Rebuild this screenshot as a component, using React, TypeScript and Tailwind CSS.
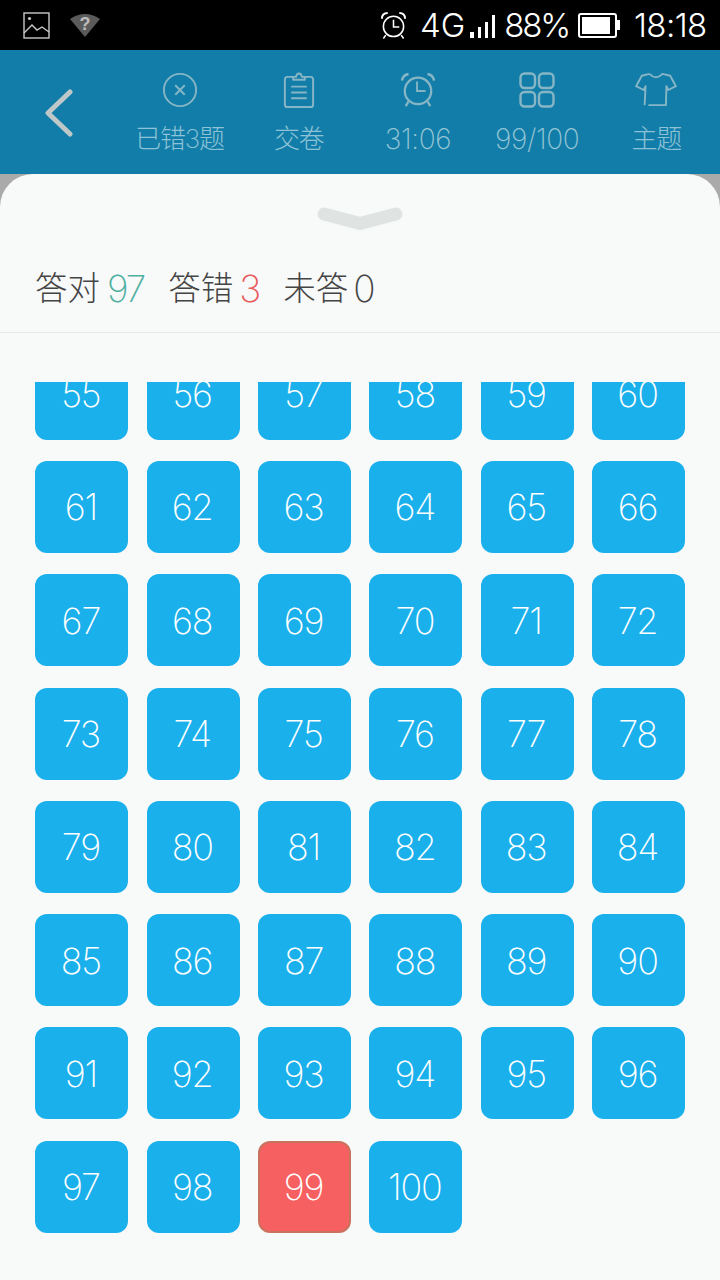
const nums = Array.from({ length: 46 }, (_, i) => i + 55);

const font = { fontFamily: '"Inter", "Noto Sans CJK SC", sans-serif' };

function HeaderItem({ icon, label, numeric }: { icon: React.ReactNode; label: string; numeric?: boolean }) {
  return (
    <div className="flex w-[119.2px] shrink-0 flex-col items-center">
      <div className="flex h-[40px] w-[50px] items-center justify-center">{icon}</div>
      <div
        className={`mt-[13px] leading-[32px] whitespace-nowrap ${
          numeric
            ? "text-[28px] font-extralight tracking-[-0.4px] text-[#93c6d4]"
            : "text-[26px] font-extralight tracking-[-1.2px] text-[#8cc3d6]"
        }`}
      >
        {label}
      </div>
    </div>
  );
}

export default function App() {
  const stroke = "#86b6c5";
  return (
    <div className="flex h-[1280px] w-[720px] flex-col overflow-hidden bg-[#aaaaaa]" style={font}>
      {/* status bar */}
      <div className="flex h-[50px] shrink-0 items-center bg-black pl-[23px] text-[33px] leading-none font-light text-white">
        <svg width="27" height="27" viewBox="0 0 27 27" fill="none" stroke="#c9c9c9" strokeWidth="1.4">
          <rect x="1" y="1" width="25" height="25" />
          <path d="M1 21 L9 13 L14 18 L19 15 L26 20" />
          <circle cx="6.5" cy="6.5" r="1.6" fill="#c9c9c9" stroke="none" />
        </svg>
        <svg className="ml-[20px]" width="30" height="24" viewBox="0 0 30 24">
          <path d="M0 6 Q15 -4 30 6 L15 24 Z" fill="#5b5b5b" />
          <text x="15" y="17" textAnchor="middle" fontSize="18" fontWeight="700" fill="#bdbdbd" fontFamily="Liberation Sans">?</text>
        </svg>
        <svg className="ml-[280px]" width="27" height="29" viewBox="0 0 28 30" fill="none" stroke="#fff" strokeWidth="1.6">
          <circle cx="14" cy="16" r="10.5" />
          <path d="M14 9 V16.5 H20" />
          <path d="M2 8 Q2 2 8 2 M20 2 Q26 2 26 8" strokeWidth="2" />
          <path d="M6 25 L3.5 28.5 M22 25 L24.5 28.5" />
        </svg>
        <span className="ml-[13px]">4G</span>
        <div className="ml-[5px] flex items-end gap-[4px] self-center pt-[3px]">
          <div className="h-[6px] w-[4px] bg-white" />
          <div className="h-[11px] w-[3px] bg-white" />
          <div className="h-[16px] w-[3px] bg-white" />
          <div className="h-[23px] w-[3px] bg-white" />
        </div>
        <span className="ml-[9px] tracking-[-2.2px]">88%</span>
        <div className="ml-[9px] flex items-center">
          <div className="flex h-[25px] w-[39px] items-center rounded-[3px] border-2 border-white p-[2px]">
            <div className="h-full w-[28px] bg-white" />
          </div>
          <div className="h-[10px] w-[3px] bg-white" />
        </div>
        <span className="ml-[14px] tracking-[-0.6px]">18:18</span>
      </div>

      {/* header */}
      <div className="flex h-[124px] shrink-0 bg-[#137da9]">
        <div className="flex w-[120px] shrink-0 items-center pl-[44px] pt-[2px]">
          <svg width="30" height="48" viewBox="0 0 30 48" fill="none" stroke="#bfc8c8" strokeWidth="5" strokeLinecap="round" strokeLinejoin="round">
            <path d="M26 3 L4 24 L26 45" />
          </svg>
        </div>
        <div className="flex flex-1 pt-[20px]">
          <HeaderItem
            label="已错3题"
            icon={
              <svg width="36" height="36" viewBox="0 0 38 38" fill="none" stroke={stroke} strokeWidth="2">
                <circle cx="19" cy="19" r="17" />
                <path d="M14 14 L24 24 M24 14 L14 24" />
              </svg>
            }
          />
          <HeaderItem
            label="交卷"
            icon={
              <svg width="32" height="37" viewBox="0 0 32 38" fill="none" stroke={stroke} strokeWidth="2" strokeLinejoin="round">
                <path d="M10 5 H4 Q1.5 5 1.5 8 V33 Q1.5 36 4 36 H28 Q30.5 36 30.5 33 V8 Q30.5 5 28 5 H22" />
                <path d="M10 8 V5 H13 Q13.5 1.5 16 1.5 Q18.5 1.5 19 5 H22 V8 Z" />
                <path d="M8 15 H24 M8 21 H24 M8 27 H24" />
              </svg>
            }
          />
          <HeaderItem
            numeric
            label="31:06"
            icon={
              <svg width="34" height="36" viewBox="0 0 36 38" fill="none" stroke={stroke} strokeWidth="2.4">
                <circle cx="18" cy="20" r="14" />
                <path d="M17 10 V20 H26" strokeWidth="2" />
                <path d="M1 9 Q2 3 8 2 M28 2 Q34 3 35 9" strokeWidth="2.6" />
                <path d="M8 31 L5 36 M28 31 L31 36" />
              </svg>
            }
          />
          <HeaderItem
            numeric
            label="99/100"
            icon={
              <svg width="36" height="36" viewBox="0 0 36 36" fill="none" stroke={stroke} strokeWidth="2.4">
                <rect x="1.5" y="1.5" width="14.5" height="14.5" rx="4" />
                <rect x="20" y="1.5" width="14.5" height="14.5" rx="4" />
                <rect x="1.5" y="20" width="14.5" height="14.5" rx="4" />
                <rect x="20" y="20" width="14.5" height="14.5" rx="4" />
              </svg>
            }
          />
          <HeaderItem
            label="主题"
            icon={
              <svg width="44" height="36" viewBox="0 0 44 38" fill="none" stroke={stroke} strokeWidth="2" strokeLinejoin="round">
                <path d="M15 2 Q22 9 29 2 L37 4 L43 15 L35 19 L33 15 L32.5 35 H14" />
                <path d="M15 2 L7 4 L1 15 L9 19 L11 15 L10 35" />
              </svg>
            }
          />
        </div>
      </div>

      {/* sheet */}
      <div className="flex min-h-0 flex-1 flex-col rounded-t-[33px] bg-[#f8f9f9]">
        <div className="flex h-[66px] shrink-0 justify-center pt-[33px]">
          <svg width="86" height="26" viewBox="0 0 86 26">
            <path d="M7 7 L43 16.5 L79 7" fill="none" stroke="#dfe4e3" strokeWidth="13" strokeLinecap="round" strokeLinejoin="round" />
          </svg>
        </div>
        <div className="flex h-[93px] shrink-0 items-center border-b border-[#e6e6e6] pt-[6px] pl-[35px] text-[32.5px] font-light text-[#444444]">
          <span>答对</span>
          <span className="ml-[7px] text-[37px] font-extralight tracking-[-2px] text-[#4fb0a0]">97</span>
          <span className="ml-[24px]">答错</span>
          <span className="ml-[6px] text-[37px] font-extralight text-[#e8595b]">3</span>
          <span className="ml-[22px]">未答</span>
          <span className="ml-[5px] text-[37px] font-extralight">0</span>
        </div>
        <div className="mt-[49px] min-h-0 flex-1 overflow-hidden pr-[35px] pl-[35.4px]">
          <div className="-mt-[34.4px] grid grid-cols-6 gap-x-[18.4px] gap-y-[21.3px]">
            {nums.map((n) => (
              <div
                key={n}
                className={`flex h-[92px] items-center justify-center rounded-[12px] pt-[1px] pr-[2px] text-[36px] font-extralight tracking-[-1.2px] text-white ${
                  n === 99 ? "border-2 border-[#c9735f] bg-[#f76060]" : "bg-[#1ab0ec]"
                }`}
              >
                {n}
              </div>
            ))}
          </div>
        </div>
      </div>
    </div>
  );
}
